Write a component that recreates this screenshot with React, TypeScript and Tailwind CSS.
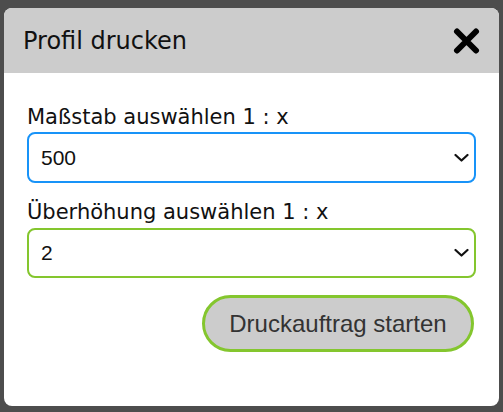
import { useState } from 'react';

function Chevron() {
  return (
    <svg width="15" height="9" viewBox="0 0 15 9" className="pointer-events-none absolute right-[7px] top-1/2 -translate-y-1/2">
      <path d="M1.5 1.5 L7.5 7 L13.5 1.5" fill="none" stroke="#111" strokeWidth="2.2" strokeLinecap="round" strokeLinejoin="round" />
    </svg>
  );
}

export default function App() {
  const [scale, setScale] = useState('500');
  const [exag, setExag] = useState('2');

  return (
    <div className="w-full h-screen bg-[#4d4d4d] pt-[8px] pl-[4px] overflow-hidden">
      <div className="w-[495px] h-[398px] bg-white rounded-[8px] overflow-hidden flex flex-col">
        {/* header */}
        <div className="h-[65px] bg-[#cccccc] flex items-center justify-between pl-[19px] pr-[19px]">
          <span className="text-[24px] text-[#111] font-['DejaVu_Sans',sans-serif] leading-none">Profil drucken</span>
          <svg width="27" height="26" viewBox="0 0 27 26">
            <path d="M4 3.5 L23 22.5 M23 3.5 L4 22.5" stroke="#000" strokeWidth="6" strokeLinecap="round" />
          </svg>
        </div>

        <div className="px-[23px] pt-[32px] flex flex-col font-['DejaVu_Sans',sans-serif] text-[#111]">
          <label className="text-[21px] leading-[25px] mb-[2px]">Maßstab auswählen 1 : x</label>
          <div className="relative">
            <select
              value={scale}
              onChange={(e) => setScale(e.target.value)}
              className="appearance-none w-full h-[51px] border-2 border-[#1893f8] rounded-[8px] pl-[12px] bg-white text-[21px] text-[#111] font-['Liberation_Sans',Arial,sans-serif] outline-none"
            >
              <option>250</option>
              <option>500</option>
              <option>1000</option>
            </select>
            <Chevron />
          </div>

          <label className="text-[21px] leading-[25px] mt-[17px] mb-[3px]">Überhöhung auswählen 1 : x</label>
          <div className="relative">
            <select
              value={exag}
              onChange={(e) => setExag(e.target.value)}
              className="appearance-none w-full h-[50px] border-2 border-[#84c62e] rounded-[8px] pl-[12px] bg-white text-[21px] text-[#111] font-['Liberation_Sans',Arial,sans-serif] outline-none"
            >
              <option>1</option>
              <option>2</option>
              <option>5</option>
            </select>
            <Chevron />
          </div>

          <div className="flex justify-end mt-[17px] pr-[2px]">
            <button className="w-[272px] h-[57px] rounded-full bg-[#cccccc] border-[3px] border-[#84c62e] text-[24px] text-[#333] font-['Liberation_Sans',Arial,sans-serif]">
              Druckauftrag starten
            </button>
          </div>
        </div>
      </div>
    </div>
  );
}
